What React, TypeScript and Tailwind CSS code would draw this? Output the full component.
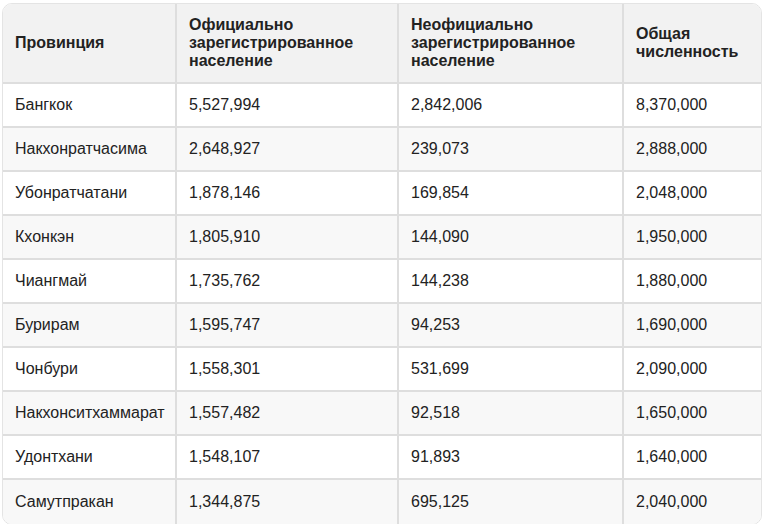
const rows: [string, string, string, string][] = [
  ['Бангкок', '5,527,994', '2,842,006', '8,370,000'],
  ['Накхонратчасима', '2,648,927', '239,073', '2,888,000'],
  ['Убонратчатани', '1,878,146', '169,854', '2,048,000'],
  ['Кхонкэн', '1,805,910', '144,090', '1,950,000'],
  ['Чиангмай', '1,735,762', '144,238', '1,880,000'],
  ['Бурирам', '1,595,747', '94,253', '1,690,000'],
  ['Чонбури', '1,558,301', '531,699', '2,090,000'],
  ['Накхонситхаммарат', '1,557,482', '92,518', '1,650,000'],
  ['Удонтхани', '1,548,107', '91,893', '1,640,000'],
  ['Самутпракан', '1,344,875', '695,125', '2,040,000'],
];

const headers = [
  'Провинция',
  'Официально зарегистрированное население',
  'Неофициально зарегистрированное население',
  'Общая численность',
];

export default function App() {
  return (
    <div className="ml-[2px] mt-[3px] w-[760px] overflow-hidden rounded-[10px] border border-[#e4e4e4] bg-white text-[16px] text-[#222] font-['Liberation_Sans',Arial,sans-serif]">
      <div className="grid grid-cols-[174px_222px_225px_1fr] bg-[#f2f2f2]">
        {headers.map((h, i) => (
          <div
            key={h}
            className={`flex h-[80px] items-center border-b-2 border-[#dedede] px-3 font-bold leading-[18px] ${i < 3 ? 'border-r-2' : ''}`}
          >
            <span>{h}</span>
          </div>
        ))}
      </div>
      {rows.map((r, ri) => (
        <div
          key={r[0]}
          className={`grid grid-cols-[174px_222px_225px_1fr] ${ri % 2 === 1 ? 'bg-[#f8f8f8]' : 'bg-white'}`}
        >
          {r.map((c, ci) => (
            <div
              key={ci}
              className={`flex h-[44px] items-center px-3 ${ri < rows.length - 1 ? 'border-b-2' : ''} border-[#dedede] ${ci < 3 ? 'border-r-2' : ''}`}
            >
              {c}
            </div>
          ))}
        </div>
      ))}
    </div>
  );
}
